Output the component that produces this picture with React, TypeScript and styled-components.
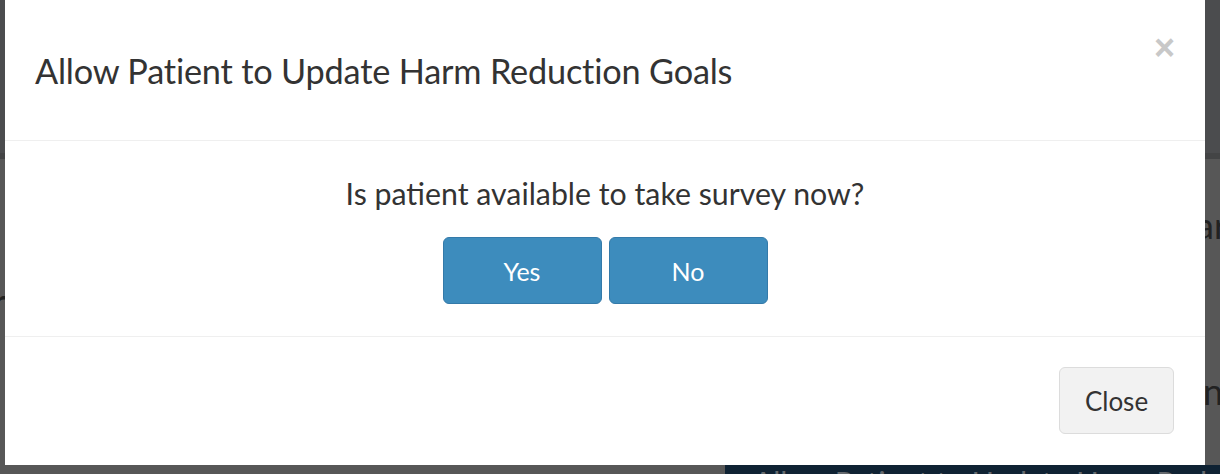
import React from "react";
import styled, { createGlobalStyle } from "styled-components";

const Global = createGlobalStyle`
  html, body { margin: 0; padding: 0; }
  body { font-family: Lato, "Open Sans", sans-serif; overflow: hidden; }
  * { box-sizing: border-box; }
`;

const Page = styled.div`
  position: relative;
  width: 1220px;
  height: 474px;
  overflow: hidden;
  background: #aeaeae;
  display: flex;
  flex-direction: column;
`;

const TopBar = styled.div`
  flex: none;
  height: 159px;
  background: #97999c;
  border-bottom: 6px solid #86888b;
`;

const Content = styled.div`
  flex: none;
  height: 306px;
  display: flex;
  justify-content: space-between;
`;

const LeftCol = styled.div`
  width: 6px;
  display: flex;
  justify-content: flex-end;
  padding-top: 124px;
  font-size: 36px;
  color: #444;
  line-height: 1;
  white-space: nowrap;
`;

const RightCol = styled.div`
  width: 24px;
  display: flex;
  flex-direction: column;
  align-items: flex-start;
  font-size: 36px;
  color: #444;
  line-height: 1;
`;

const RightText = styled.div<{ $mt: number; $ml?: number }>`
  margin-top: ${(p) => p.$mt}px;
  margin-left: ${(p) => p.$ml ?? 0}px;
  white-space: nowrap;
`;

const NavyBar = styled.div`
  flex: 1;
  margin-left: 725px;
  background: #1e4466;
  color: #c9d2dc;
  font-size: 30px;
  line-height: 1;
  padding: 2px 0 0 28px;
  white-space: nowrap;
  overflow: hidden;
`;

const Backdrop = styled.div`
  position: absolute;
  inset: 0;
  background: rgba(0, 0, 0, 0.5);
`;

const Modal = styled.div`
  position: absolute;
  left: 5px;
  top: 0;
  width: 1200px;
  height: 465px;
  background: #fff;
  display: flex;
  flex-direction: column;
  color: #333;
`;

const Header = styled.div`
  position: relative;
  height: 141px;
  border-bottom: 1px solid #efefef;
  display: flex;
  align-items: center;
  padding: 0 30px;
`;

const Title = styled.h4`
  margin: 0;
  font-size: 34.3px;
  font-weight: 400;
  color: #333;
  letter-spacing: -0.2px;
`;

const CloseX = styled.button`
  position: absolute;
  right: 30px;
  top: 30px;
  border: 0;
  background: transparent;
  padding: 0;
  font-family: "Liberation Sans", Arial, sans-serif;
  font-size: 36px;
  font-weight: 700;
  line-height: 1;
  color: #c8c8c8;
  cursor: pointer;
`;

const Body = styled.div`
  height: 196px;
  border-bottom: 1px solid #efefef;
  display: flex;
  flex-direction: column;
  align-items: center;
  padding-top: 33px;
`;

const Question = styled.p`
  margin: 0;
  font-size: 30.3px;
  line-height: 38px;
  color: #333;
`;

const ButtonRow = styled.div`
  display: flex;
  gap: 7px;
  margin-top: 25px;
`;

const PrimaryButton = styled.button`
  width: 159px;
  height: 67px;
  border: 1px solid #347aa9;
  border-radius: 6px;
  background: #3d8cbd;
  color: #fff;
  font-family: inherit;
  font-size: 25px;
  cursor: pointer;
`;

const Footer = styled.div`
  flex: 1;
  display: flex;
  justify-content: flex-end;
  align-items: flex-start;
  padding: 30px 31px 0 0;
`;

const DefaultButton = styled.button`
  width: 115px;
  height: 67px;
  border: 1px solid #dcdcdc;
  border-radius: 6px;
  background: #f2f2f2;
  color: #333;
  font-family: inherit;
  font-size: 26px;
  cursor: pointer;
`;

export default function App() {
  return (
    <>
      <Global />
      <Page>
        <TopBar />
        <Content>
          <LeftCol>r</LeftCol>
          <RightCol>
            <RightText $mt={48}>ar</RightText>
            <RightText $mt={130} $ml={7}>n</RightText>
          </RightCol>
        </Content>
        <NavyBar>Allow Patient to Update Harm Reduction Goals</NavyBar>
        <Backdrop />
        <Modal>
          <Header>
            <Title>Allow Patient to Update Harm Reduction Goals</Title>
            <CloseX aria-label="Close">×</CloseX>
          </Header>
          <Body>
            <Question>Is patient available to take survey now?</Question>
            <ButtonRow>
              <PrimaryButton>Yes</PrimaryButton>
              <PrimaryButton>No</PrimaryButton>
            </ButtonRow>
          </Body>
          <Footer>
            <DefaultButton>Close</DefaultButton>
          </Footer>
        </Modal>
      </Page>
    </>
  );
}
